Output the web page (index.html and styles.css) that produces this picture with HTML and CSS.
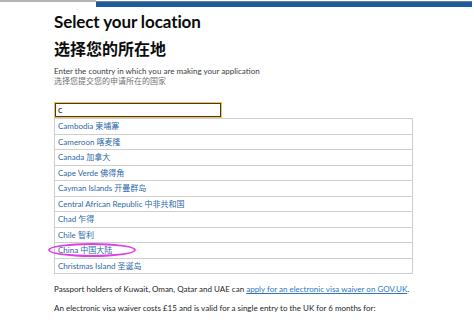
FILE: index.html
```html
<!DOCTYPE html>
<html lang="en">
<head>
    <meta charset="UTF-8">
    <meta name="viewport" content="width=device-width, initial-scale=1.0">
    <title>Select your location</title>
    <link rel="stylesheet" href="styles.css">
</head>
<body>
    <div class="topbar">
        <div class="topbar-grey"></div>
        <div class="topbar-blue"></div>
    </div>

    <div class="container">
        <h1>Select your location</h1>
        <h2>选择您的所在地</h2>

        <p class="hint">Enter the country in which you are making your application</p>
        <p class="hint hint-zh">选择您提交您的申请所在的国家</p>

        <!-- Country autocomplete -->
        <div class="autocomplete">
            <div class="input">c</div>
            <ul class="options">
                <li>Cambodia 柬埔寨</li>
                <li>Cameroon 喀麦隆</li>
                <li>Canada 加拿大</li>
                <li>Cape Verde 佛得角</li>
                <li>Cayman Islands 开曼群岛</li>
                <li>Central African Republic 中非共和国</li>
                <li>Chad 乍得</li>
                <li>Chile 智利</li>
                <li class="marked">China 中国大陆<span class="ring"></span></li>
                <li>Christmas Island 圣诞岛</li>
            </ul>
        </div>

        <p class="body">Passport holders of Kuwait, Oman, Qatar and UAE can <a href="#">apply for an electronic visa waiver on GOV.UK</a>.</p>
        <p class="body">An electronic visa waiver costs £15 and is valid for a single entry to the UK for 6 months for:</p>
    </div>
</body>
</html>
```

FILE: styles.css
```css
* {
    box-sizing: border-box;
    margin: 0;
    padding: 0;
}

body {
    font-family: 'Lato', 'Noto Sans CJK SC', sans-serif;
    background-color: #ffffff;
    color: #0b0c0c;
    overflow: hidden;
}

.topbar {
    display: flex;
    height: 7px;
}

.topbar-grey {
    width: 96px;
    height: 2px;
    background-color: #b1b4b6;
}

.topbar-blue {
    width: 376px;
    height: 6px;
    margin-top: 1px;
    background-color: #1d5a9c;
    border-top: 1px solid #6a7f96;
}

.container {
    padding-left: 54px;
}

h1 {
    font-size: 17px;
    font-weight: 700;
    line-height: 20px;
    margin-top: 5px;
    letter-spacing: -0.1px;
}

h2 {
    font-size: 16px;
    font-weight: 700;
    line-height: 20px;
    margin-top: 6px;
    font-family: 'Noto Sans CJK SC', sans-serif;
}

.hint {
    font-size: 8px;
    line-height: 10px;
    color: #3a3c3e;
}

.hint:first-of-type {
    margin-top: 8px;
}

.hint-zh {
    color: #6f7173;
}

.autocomplete {
    margin-top: 16px;
    width: 359px;
}

.input {
    width: 168px;
    height: 16px;
    border: 1px solid #ffbf47;
    box-shadow: inset 0 0 0 1px #3a3a3a;
    font-size: 9px;
    line-height: 13px;
    padding-left: 3px;
}

.options {
    list-style: none;
    border: 1px solid #cfcfcf;
    border-bottom: none;
}

.options li {
    position: relative;
    height: 15.5px;
    line-height: 14px;
    font-size: 8px;
    color: #2b68a8;
    padding-left: 3px;
    border-bottom: 1px solid #cfcfcf;
}

.ring {
    position: absolute;
    left: -7px;
    top: 0;
    width: 88px;
    height: 14px;
    border: 2px solid #e23ce6;
    border-radius: 50%;
}

.body {
    font-size: 8px;
    line-height: 10px;
    color: #1d1e1f;
    margin-top: 10px;
}

.body + .body {
    margin-top: 9px;
}

.body a {
    color: #2e78c2;
}
```
